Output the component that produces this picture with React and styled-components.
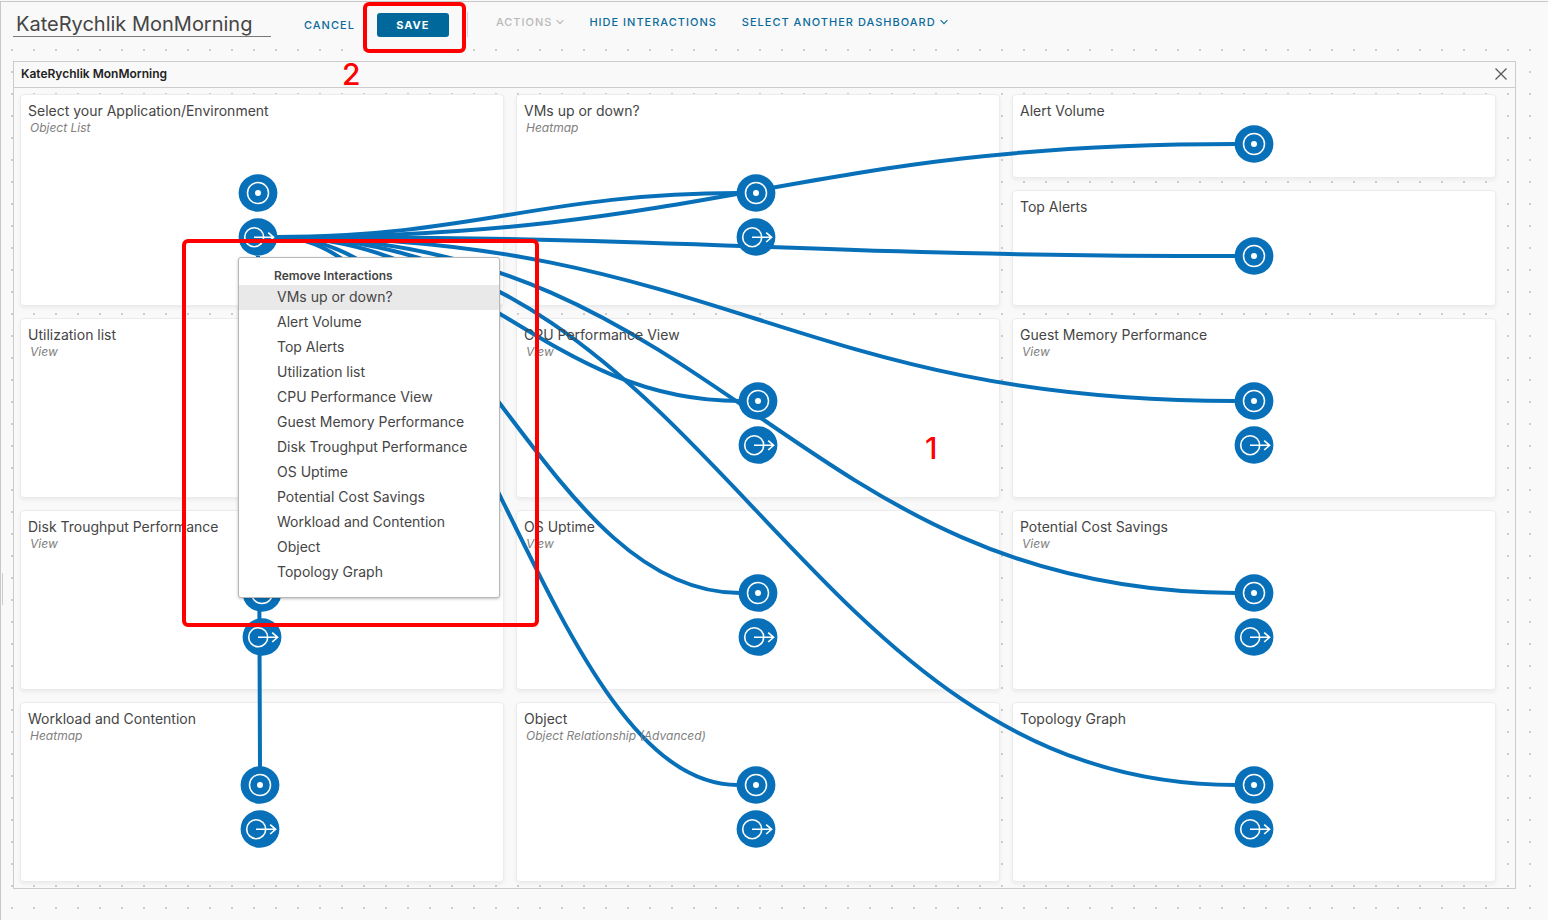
import React from "react";
import styled, { createGlobalStyle } from "styled-components";

const GlobalStyle = createGlobalStyle`
  *, *::before, *::after { box-sizing: border-box; }
  body {
    margin: 0;
    background: #f9f9f9;
    color: #454545;
    font: 14px/20px Inter, "Liberation Sans", sans-serif;
  }
  button, input { font: inherit; color: inherit; }
  h1, h2, h3, p, ul { margin: 0; padding: 0; }
`;

const BLUE = "#0770b8";

const Page = styled.div`
  position: relative;
  min-height: calc(100vh - 1px);
  overflow: hidden;
  margin-top: 1px;
  padding: 0 32px 31px 12px;
  border-top: 1px solid #c8c8c8;
  border-left: 1px solid #c8c8c8;
  background-color: #f9f9f9;
  background-image: conic-gradient(from 90deg at 20px 20px, #ccc 90deg, transparent 0);
  background-size: 22px 22px;
  background-position: -10px -17px;
`;

const Toolbar = styled.header`
  display: flex;
  align-items: flex-start;
  height: 47px;
  margin: 0 -32px 12px -12px;
  padding-left: 12px;
  background: #f9f9f9;
`;

const NameInput = styled.input`
  width: 258px;
  height: 35px;
  padding: 10px 3px 0;
  border: 0;
  border-bottom: 1px solid #777;
  border-radius: 0;
  background: none;
  font-size: 20px;
  outline: none;
`;

const TextButton = styled.button`
  display: flex;
  align-items: center;
  gap: 4px;
  height: 24px;
  margin: ${(p) => (p.$secondary ? "8px" : "11px")} 0 0 ${(p) => p.$lead}px;
  padding: 0;
  border: 0;
  background: none;
  color: ${(p) => (p.disabled ? "#b9b9b9" : "#0b6b9c")};
  font-size: 11px;
  font-weight: 500;
  letter-spacing: 1px;
  text-transform: uppercase;
  white-space: nowrap;
  cursor: pointer;
`;

const SaveButton = styled.button`
  width: 72px;
  height: 24px;
  margin: 11px 0 0 22px;
  padding: 0;
  border: 0;
  border-radius: 3px;
  background: #00689a;
  color: #fff;
  font-size: 11px;
  font-weight: 700;
  letter-spacing: 1px;
  text-transform: uppercase;
  cursor: pointer;
`;

const Divider = styled.span`
  width: 1px;
  height: 25px;
  margin: 10px 0 0 18px;
  background: #d4d4d4;
`;

const Panel = styled.main`
  position: relative;
  border: 1px solid #ccc;
`;

const PanelHeader = styled.div`
  display: flex;
  align-items: center;
  justify-content: space-between;
  height: 26px;
  padding: 0 8px 2px 7px;
  border-bottom: 1px solid #ccc;
  background: #f9f9f9;
`;

const PanelTitle = styled.h1`
  color: #222;
  font-size: 12px;
  font-weight: 600;
  line-height: 20px;
`;

const CloseButton = styled.button`
  display: flex;
  padding: 0;
  border: 0;
  background: none;
  cursor: pointer;
`;

const Canvas = styled.div`
  position: relative;
  margin: 6px 19px 6px 6px;
`;

const Grid = styled.div`
  display: grid;
  grid-template-columns: repeat(3, 1fr);
  grid-template-rows: 84px 116px repeat(3, 180px);
  gap: 12px;
`;

const Card = styled.section`
  grid-row: span ${(p) => p.$rows || 1};
  padding: 6px 7px;
  border: 1px solid #ececec;
  border-radius: 4px;
  background: #fff;
  box-shadow: 0 2px 4px rgba(0, 0, 0, 0.06);
`;

/* Card captions stay readable above the wires that cross them. */
const CardTitle = styled.h2`
  position: relative;
  z-index: 2;
  font-size: 14px;
  font-weight: 400;
  line-height: 20px;
`;

const CardKind = styled.p`
  position: relative;
  z-index: 2;
  padding-left: 2px;
  color: #808080;
  font-size: 12px;
  font-style: italic;
  line-height: 14px;
`;

const Wires = styled.svg`
  position: absolute;
  z-index: 1;
  inset: 0;
  width: 100%;
  height: 100%;
  overflow: visible;
  pointer-events: none;
  path {
    fill: none;
    stroke: ${BLUE};
    stroke-width: 4px;
    vector-effect: non-scaling-stroke;
  }
`;

const CANVAS_W = 1476;
const CANVAS_H = 788;

const Node = styled.button`
  position: absolute;
  z-index: 2;
  top: ${(p) => p.$y}px;
  left: ${(p) => (p.$x / CANVAS_W) * 100}%;
  display: block;
  width: 40px;
  height: 40px;
  margin: -20px 0 0 -20px;
  padding: 0;
  border: 0;
  background: none;
  cursor: pointer;
  svg { display: block; }
`;

const Menu = styled.div`
  position: absolute;
  z-index: 3;
  top: 163px;
  left: ${(218 / CANVAS_W) * 100}%;
  width: 262px;
  padding: 9px 0 12px;
  border: 1px solid #b8b8b8;
  border-radius: 3px;
  background: #fff;
  box-shadow: 0 1px 3px rgba(0, 0, 0, 0.25);
`;

const MenuTitle = styled.h3`
  padding-left: 35px;
  font-size: 12px;
  font-weight: 600;
  line-height: 18px;
`;

const MenuList = styled.ul`
  list-style: none;
`;

const MenuItem = styled.button`
  display: block;
  width: 100%;
  height: 25px;
  padding: 0 0 2px 38px;
  border: 0;
  background: ${(p) => (p.$active ? "#e9e9e9" : "none")};
  line-height: 23px;
  text-align: left;
  cursor: pointer;
`;

const Marker = styled.div`
  position: absolute;
  z-index: 4;
  top: ${(p) => p.$top}px;
  left: ${(p) => p.$left}px;
  width: ${(p) => p.$width}px;
  height: ${(p) => p.$height}px;
  border: 4px solid #f00;
  border-radius: 6px;
  pointer-events: none;
`;

const MarkerNumber = styled.span`
  position: absolute;
  z-index: 4;
  top: ${(p) => p.$top}px;
  left: ${(p) => p.$left}px;
  color: #f00;
  font-size: 30px;
  font-weight: 500;
  line-height: 30px;
`;

const Handle = styled.span`
  position: absolute;
  top: 571px;
  left: 1px;
  width: 1px;
  height: 32px;
  background: #ccc;
`;

const cards = [
  { title: "Select your Application/Environment", kind: "Object List", rows: 2 },
  { title: "VMs up or down?", kind: "Heatmap", rows: 2 },
  { title: "Alert Volume" },
  { title: "Top Alerts" },
  { title: "Utilization list", kind: "View" },
  { title: "CPU Performance View", kind: "View" },
  { title: "Guest Memory Performance", kind: "View" },
  { title: "Disk Troughput Performance", kind: "View" },
  { title: "OS Uptime", kind: "View" },
  { title: "Potential Cost Savings", kind: "View" },
  { title: "Workload and Contention", kind: "Heatmap" },
  { title: "Object", kind: "Object Relationship (Advanced)" },
  { title: "Topology Graph" },
];

const source = { x: 238, y: 143 };

const inputs = [
  { name: "Select your Application/Environment", x: 238, y: 99 },
  { name: "VMs up or down?", x: 736, y: 99, wired: true },
  { name: "Alert Volume", x: 1234, y: 50, wired: true },
  { name: "Top Alerts", x: 1234, y: 162, wired: true },
  { name: "Utilization list", x: 242, y: 307, wired: true, below: true },
  { name: "CPU Performance View", x: 738, y: 307, wired: true },
  { name: "Guest Memory Performance", x: 1234, y: 307, wired: true },
  { name: "Disk Troughput Performance", x: 242, y: 499, wired: true, below: true },
  { name: "OS Uptime", x: 738, y: 499, wired: true },
  { name: "Potential Cost Savings", x: 1234, y: 499, wired: true },
  { name: "Workload and Contention", x: 240, y: 691, wired: true, below: true },
  { name: "Object", x: 736, y: 691, wired: true },
  { name: "Topology Graph", x: 1234, y: 691, wired: true },
];

const outputs = inputs
  .filter((n) => n.name !== "Alert Volume" && n.name !== "Top Alerts")
  .map((n) => ({ ...n, y: n.y + 44 }));

const menuItems = cards.slice(1).map((c) => c.title);

function wirePath({ x, y, below }) {
  if (below) {
    const top = source.y + 19;
    const end = y - 18;
    const mid = (top + end) / 2;
    return `M${source.x} ${top}C${source.x} ${mid} ${x} ${mid} ${x} ${end}`;
  }
  const start = source.x + 19;
  const end = x - 18;
  const reach = (end - start) / 2 - 38;
  return `M${start} ${source.y}C${start + reach} ${source.y} ${end - reach} ${y} ${end} ${y}`;
}

function InputIcon() {
  return (
    <svg width="40" height="40" viewBox="0 0 40 40" aria-hidden="true">
      <ellipse cx="20" cy="20" rx="19.4" ry="18.8" fill={BLUE} />
      <circle cx="20" cy="20" r="10.5" fill="none" stroke="#fff" strokeWidth="1.5" />
      <circle cx="20" cy="20" r="3" fill="#fff" />
    </svg>
  );
}

function OutputIcon() {
  return (
    <svg width="40" height="40" viewBox="0 0 40 40" aria-hidden="true">
      <ellipse cx="20" cy="20" rx="19.4" ry="18.8" fill={BLUE} />
      <g fill="none" stroke="#fff" strokeWidth="1.6">
        <circle cx="16.2" cy="20.2" r="9.5" />
        <path d="M16 20.3H35.5M30.2 15.6L35.6 20.3L30.2 25" />
      </g>
    </svg>
  );
}

function Chevron() {
  return (
    <svg width="8" height="6" viewBox="0 0 8 6" aria-hidden="true">
      <path d="M0.6 1.2L4 4.6L7.4 1.2" fill="none" stroke="currentColor" strokeWidth="1.1" />
    </svg>
  );
}

export default function App() {
  return (
    <>
      <GlobalStyle />
      <Page>
        <Toolbar>
          <NameInput aria-label="Dashboard name" defaultValue="KateRychlik MonMorning" />
          <TextButton $lead={33}>Cancel</TextButton>
          <SaveButton>Save</SaveButton>
          <Divider />
          <TextButton $secondary $lead={28} disabled>
            Actions <Chevron />
          </TextButton>
          <TextButton $secondary $lead={25}>Hide Interactions</TextButton>
          <TextButton $secondary $lead={25}>
            Select Another Dashboard <Chevron />
          </TextButton>
        </Toolbar>

        <Panel>
          <PanelHeader>
            <PanelTitle>KateRychlik MonMorning</PanelTitle>
            <CloseButton aria-label="Close">
              <svg width="12" height="12" viewBox="0 0 12 12" aria-hidden="true">
                <path d="M0.5 0.5L11.5 11.5M11.5 0.5L0.5 11.5" stroke="#565656" strokeWidth="1.2" />
              </svg>
            </CloseButton>
          </PanelHeader>

          <Canvas>
            <Grid>
              {cards.map((c) => (
                <Card key={c.title} $rows={c.rows}>
                  <CardTitle>{c.title}</CardTitle>
                  {c.kind && <CardKind>{c.kind}</CardKind>}
                </Card>
              ))}
            </Grid>

            <Wires viewBox={`0 0 ${CANVAS_W} ${CANVAS_H}`} preserveAspectRatio="none" aria-hidden="true">
              {inputs.filter((n) => n.wired).map((n) => (
                <path key={n.name} d={wirePath(n)} />
              ))}
            </Wires>

            {inputs.map((n) => (
              <Node key={n.name} $x={n.x} $y={n.y} aria-label={`${n.name} input`}>
                <InputIcon />
              </Node>
            ))}
            {outputs.map((n) => (
              <Node key={n.name} $x={n.x} $y={n.y} aria-label={`${n.name} output`}>
                <OutputIcon />
              </Node>
            ))}

            <Menu>
              <MenuTitle>Remove Interactions</MenuTitle>
              <MenuList>
                {menuItems.map((name, i) => (
                  <li key={name}>
                    <MenuItem $active={i === 0}>{name}</MenuItem>
                  </li>
                ))}
              </MenuList>
            </Menu>
          </Canvas>
        </Panel>

        <Handle />
        <Marker $top={0} $left={362} $width={103} $height={51} />
        <Marker $top={237} $left={181} $width={357} $height={388} />
        <MarkerNumber $top={57} $left={341}>2</MarkerNumber>
        <MarkerNumber $top={431} $left={924}>1</MarkerNumber>
      </Page>
    </>
  );
}
